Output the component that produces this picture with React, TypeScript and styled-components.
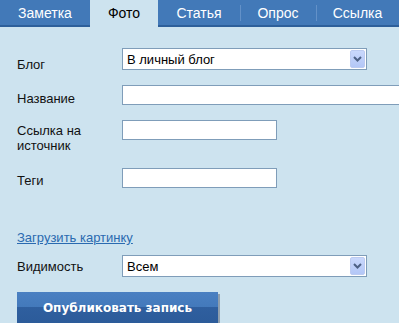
import styled, { createGlobalStyle } from 'styled-components';

const GlobalStyle = createGlobalStyle`
  html, body {
    margin: 0;
    padding: 0;
    background: #cde3ef;
    font-family: "Liberation Sans", Arial, sans-serif;
    overflow: hidden;
  }
`;

const tabs = [
  { label: 'Заметка', width: 90 },
  { label: 'Фото', width: 68, active: true },
  { label: 'Статья', width: 82 },
  { label: 'Опрос', width: 76 },
  { label: 'Ссылка', width: 83 },
];

const Chevron = () => (
  <svg width="9" height="6" viewBox="0 0 9 6">
    <path d="M1 1 L4.5 4.5 L8 1" fill="none" stroke="#4d6185" strokeWidth="2" />
  </svg>
);

const Select = ({ value }: { value: string }) => (
  <SelectBox>
    <SelectValue>{value}</SelectValue>
    <DropButton>
      <Chevron />
    </DropButton>
  </SelectBox>
);

const App = () => {
  return (
    <Page>
      <GlobalStyle />
      <TabBar>
        {tabs.map((t, i) => (
          <Tab key={t.label} $active={!!t.active} $w={t.width} $sep={i > 2}>
            {t.label}
          </Tab>
        ))}
      </TabBar>
      <Form>
        <Row $mt={21}>
          <Label $pt={9}>Блог</Label>
          <Select value="В личный блог" />
        </Row>
        <Row $mt={13}>
          <Label $pt={6}>Название</Label>
          <Input $w={290} />
        </Row>
        <Row $mt={14}>
          <Label $pt={3}>
            Ссылка на
            <br />
            источник
          </Label>
          <Input $w={155} />
        </Row>
        <Row $mt={15}>
          <Label $pt={5}>Теги</Label>
          <Input $w={155} />
        </Row>
        <UploadLink href="#">Загрузить картинку</UploadLink>
        <Row $mt={10}>
          <Label $pt={4}>Видимость</Label>
          <Select value="Всем" />
        </Row>
        <Submit>Опубликовать запись</Submit>
      </Form>
    </Page>
  );
};

export default App;

const Page = styled.div`
  width: 399px;
  height: 323px;
  background: #cde3ef;
`;

const TabBar = styled.div`
  display: flex;
  height: 27px;
  background: #4279b8;
  box-shadow: inset 0 -2px 0 #2d5f9a;
`;

const Tab = styled.div<{ $active: boolean; $w: number; $sep: boolean }>`
  position: relative;
  width: ${(p) => p.$w}px;
  flex-shrink: 0;
  height: ${(p) => (p.$active ? 27 : 25)}px;
  display: flex;
  align-items: center;
  justify-content: center;
  padding-bottom: ${(p) => (p.$active ? 2 : 0)}px;
  box-sizing: border-box;
  font-size: 14px;
  color: ${(p) => (p.$active ? '#000' : '#fff')};
  background: ${(p) => (p.$active ? '#cde3ef' : 'transparent')};

  &::before {
    content: '';
    display: ${(p) => (p.$sep ? 'block' : 'none')};
    position: absolute;
    left: 0;
    top: 5px;
    height: 16px;
    width: 1px;
    background: #6391c8;
  }
`;

const Form = styled.div`
  display: flex;
  flex-direction: column;
  padding-left: 17px;
`;

const Row = styled.div<{ $mt: number }>`
  display: flex;
  align-items: flex-start;
  margin-top: ${(p) => p.$mt}px;
`;

const Label = styled.div<{ $pt: number }>`
  width: 105px;
  flex-shrink: 0;
  padding-top: ${(p) => p.$pt}px;
  font-size: 13px;
  line-height: 15px;
  color: #111;
`;

const Input = styled.div<{ $w: number }>`
  width: ${(p) => p.$w}px;
  height: 20px;
  box-sizing: border-box;
  background: #fff;
  border: 1px solid #7f9db9;
  flex-shrink: 0;
`;

const SelectBox = styled.div`
  width: 245px;
  height: 22px;
  box-sizing: border-box;
  background: #fff;
  border: 1px solid #7f9db9;
  display: flex;
  align-items: center;
  justify-content: space-between;
  padding: 1px;
`;

const SelectValue = styled.span`
  font-size: 13px;
  padding-left: 3px;
  color: #000;
`;

const DropButton = styled.div`
  width: 15px;
  height: 18px;
  box-sizing: border-box;
  border: 1px solid #bccbf1;
  border-radius: 2px;
  background: linear-gradient(#c9d8fc, #b3c7f7);
  display: flex;
  align-items: center;
  justify-content: center;
`;

const UploadLink = styled.a`
  margin-top: 42px;
  font-size: 13px;
  line-height: 15px;
  color: #2a6ab0;
  text-decoration: underline;
  align-self: flex-start;
`;

const Submit = styled.button`
  margin-top: 15px;
  width: 201px;
  height: 36px;
  align-self: flex-start;
  border: 0;
  padding: 0 0 5px 0;
  font-family: "DejaVu Sans", Verdana, sans-serif;
  font-size: 12px;
  font-weight: bold;
  color: #fff;
  background: linear-gradient(#4a80c2 0%, #4379bb 42%, #2f5f9f 42%, #2b5a98 100%);
  box-shadow: 2px 2px 0 #8f9fae;
  cursor: pointer;
`;
